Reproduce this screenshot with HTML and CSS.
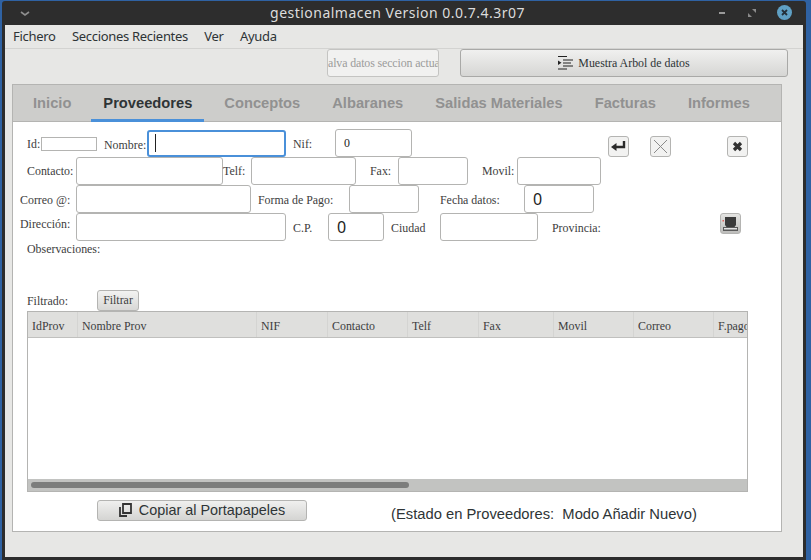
FILE: index.html
```html
<!DOCTYPE html>
<html lang="es">
<head>
<meta charset="utf-8">
<title>gestionalmacen</title>
<link rel="stylesheet" href="styles.css">
</head>
<body>
<div class="window">
  <header class="titlebar">
    <svg class="tb-menu" width="10" height="6" viewBox="0 0 10 6"><path d="M1 1l4 3 4-3" fill="none" stroke="#8e8e8e" stroke-width="1.6"/></svg>
    <span class="title">gestionalmacen Version 0.0.7.4.3r07</span>
    <div class="wm">
      <svg width="8" height="4" viewBox="0 0 8 4"><rect y="1" width="6" height="2" fill="#9a9a9a"/></svg>
      <svg width="8" height="8" viewBox="0 0 8 8"><path d="M8 0v4L4 0zM0 8V4l4 4z" fill="#8a8a8a"/></svg>
      <svg width="15" height="15" viewBox="0 0 15 15"><circle cx="7.5" cy="7.5" r="7.5" fill="#5fa0c4"/><path d="M5 5l5 5M10 5l-5 5" stroke="#23303a" stroke-width="1.8"/></svg>
    </div>
  </header>
  <div class="client">
    <nav class="menubar"><span>Fichero</span><span>Secciones Recientes</span><span>Ver</span><span>Ayuda</span></nav>
    <div class="toolbar">
      <button class="tool tool-disabled"><span class="clip">alva datos seccion actual</span></button>
      <button class="tool tool-tree">
        <svg width="15" height="14" viewBox="0 0 15 14"><path d="M0 .5h9M0 13h9M5 4h10M5 7h8M5 10h10" stroke="#222" stroke-width="1.2" fill="none"/><path d="M0 4.500l3.500 2.200L0 9z" fill="#222"/></svg>
        Muestra Arbol de datos
      </button>
    </div>
    <section class="panel">
      <div class="tabs">
        <span class="tab">Inicio</span>
        <span class="tab active">Proveedores</span>
        <span class="tab">Conceptos</span>
        <span class="tab">Albaranes</span>
        <span class="tab">Salidas Materiales</span>
        <span class="tab">Facturas</span>
        <span class="tab">Informes</span>
      </div>
      <div class="page">
        <div class="row r1">
          <label class="l-id">Id:</label><div class="f f-id"></div>
          <label class="l-nombre">Nombre:</label><div class="f f-nombre"><i class="caret"></i></div>
          <label class="l-nif">Nif:</label><div class="f f-nif">0</div>
          <button class="ib ib1"><svg width="15" height="11" viewBox="0 0 15 11"><path d="M13 0v6H5" fill="none" stroke="#2a2a2a" stroke-width="2.4"/><path d="M0 6l5.500-4v8z" fill="#2a2a2a"/></svg></button>
          <button class="ib ib2"><svg width="15" height="15" viewBox="0 0 15 15"><path d="M1 1l13 13M14 1L1 14" stroke="#8b8b8b" stroke-width="1"/></svg></button>
          <button class="ib ib3"><svg width="11" height="11" viewBox="0 0 11 11"><path d="M2 2l7 7M9 2l-7 7" stroke="#333" stroke-width="3.200"/></svg></button>
        </div>
        <div class="row r2">
          <label class="l-contacto">Contacto:</label><div class="f f-contacto"></div>
          <label class="l-telf">Telf:</label><div class="f f-telf"></div>
          <label class="l-fax">Fax:</label><div class="f f-fax"></div>
          <label class="l-movil">Movil:</label><div class="f f-movil"></div>
        </div>
        <div class="row r3">
          <label class="l-correo">Correo @:</label><div class="f f-correo"></div>
          <label class="l-forma">Forma de Pago:</label><div class="f f-forma"></div>
          <label class="l-fecha">Fecha datos:</label><div class="f f-fecha big">0</div>
        </div>
        <div class="row r4">
          <label class="l-dir">Dirección:</label><div class="f f-dir"></div>
          <label class="l-cp">C.P.</label><div class="f f-cp big">0</div>
          <label class="l-ciudad">Ciudad</label><div class="f f-ciudad"></div>
          <label class="l-prov">Provincia:</label>
          <button class="ib ib4"><svg width="17" height="16" viewBox="0 0 17 16"><path d="M3 1h11v8l-1.500 2h-8L3 9z" fill="#3a3a3a"/><path d="M1 11h15v4H1z" fill="#5a5a5a"/><path d="M2 12h13v1.500H2z" fill="#e2e2e2"/><rect x="0.500" y="4" width="1.500" height="1.500" fill="#e0605a"/></svg></button>
        </div>
        <div class="obs">Observaciones:</div>
        <div class="filter"><label>Filtrado:</label><button class="filter-btn">Filtrar</button></div>
        <div class="table">
          <div class="thead">
            <span class="c1">IdProv</span><span class="c2">Nombre Prov</span><span class="c3">NIF</span><span class="c4">Contacto</span><span class="c5">Telf</span><span class="c6">Fax</span><span class="c7">Movil</span><span class="c8">Correo</span><span class="c9">F.pago</span>
          </div>
          <div class="tbody"></div>
          <div class="hscroll"><div class="thumb"></div></div>
        </div>
        <div class="bottom">
          <button class="copy">
            <svg width="13" height="14" viewBox="0 0 13 14"><path d="M4 1h8v9H4z" fill="none" stroke="#333" stroke-width="1.800"/><path d="M1 4v9h7" fill="none" stroke="#333" stroke-width="1.800"/></svg>
            Copiar al Portapapeles
          </button>
          <span class="status">(Estado en Proveedores:&nbsp; Modo Añadir Nuevo)</span>
        </div>
      </div>
    </section>
  </div>
</div>
</body>
</html>
```
FILE: styles.css
```css
* { box-sizing: border-box; }
html, body { margin: 0; padding: 0; }
body { width: 811px; height: 560px; overflow: hidden; background: #2f62a3; font-family: "Liberation Serif", serif; }
button { font: inherit; margin: 0; padding: 0; }

.window { width: 804px; height: 559px; margin: 1px 0 0 2px; background: #2d2d2d; padding: 0 3px 3px; display: flex; flex-direction: column; border-radius: 3px 3px 0 0; }
.titlebar { height: 24px; flex: none; position: relative; display: flex; align-items: center; justify-content: center; color: #dcdcdc; font: 14px "Noto Sans", sans-serif; letter-spacing: .48px; }
.title { margin-left: -13px; margin-top: -1px; }
.tb-menu { position: absolute; left: 15px; top: 10px; }
.wm { position: absolute; right: 11px; top: 4px; display: flex; align-items: center; gap: 21px; }

.client { flex: 1; background: #e7e7e5; display: flex; flex-direction: column; }
.menubar { height: 24px; flex: none; display: flex; gap: 16.300px; padding: 0 0 2px 8px; align-items: center; border-bottom: 1px solid #d3d3d1; font: 13px "Noto Sans", sans-serif; letter-spacing: -.3px; color: #2e3436; }
.toolbar { height: 36px; flex: none; display: flex; padding: 0 0 0 322px; gap: 21px; }
.tool { height: 28px; border: 1px solid #b5b5b3; border-radius: 3px; font-size: 11.900px; }
.tool-disabled { width: 112px; background: #f1f1f0; color: #9b9b9b; overflow: hidden; padding: 0; border-color: #c4c4c2; }
.clip { display: block; white-space: nowrap; width: 100%; overflow: hidden; letter-spacing: -.12px; text-align: left; }
.tool-tree { width: 328px; background: linear-gradient(#f0f0ef, #d6d6d4); color: #2e3436; display: flex; align-items: center; justify-content: center; gap: 5px; border-color: #a9a9a7; }

.panel { margin: -1px 21px 0 7px; width: 770px; height: 448px; border: 1px solid #b4b4b2; background: #fff; display: flex; flex-direction: column; }
.tabs { height: 37px; flex: none; background: #cdcdcb; border-bottom: 1px solid #b4b4b2; display: flex; font: bold 14.700px "Liberation Sans", sans-serif; color: #919191; padding-left: 8px; }
.tab { padding: 0 12px; line-height: 36px; margin-right: 8px; height: 37px; }
.tab.active { color: #2e3436; border-bottom: 3px solid #4a90d9; }

.page { flex: 1; font-size: 11.900px; color: #3d3d3d; display: flex; flex-direction: column; padding-top: 7px; }
.row { display: flex; height: 28px; flex: none; align-items: center; }
.row label { flex: none; white-space: nowrap; }
.f { height: 28px; flex: none; border: 1px solid #b4b4b2; border-radius: 3px; background: #fff; display: flex; align-items: center; padding-left: 8px; color: #222; }
.big { font: 16px "Noto Sans", sans-serif; }

.l-id { margin-left: 14px; width: 14px; margin-top: 3px; }
.f-id { width: 56px; height: 14px; border-radius: 0; margin-top: 2px; }
.l-nombre { margin-left: 7px; width: 43px; margin-top: 5px; }
.f-nombre { width: 139px; height: 27px; border: 2px solid #4a90d9; }
.caret { width: 1px; height: 18px; background: #222; margin-left: -2px; }
.l-nif { margin-left: 7px; width: 42px; margin-top: 3px; }
.f-nif { width: 77px; }
.ib { flex: none; width: 21px; height: 21px; border: 1px solid #b4b4b2; border-radius: 3px; background: #f2f2f1; display: flex; align-items: center; justify-content: center; }
.ib1 { margin-left: 196px; margin-top: 7px; }
.ib2 { margin-left: 21px; margin-top: 7px; }
.ib3 { margin-left: 56px; margin-top: 7px; }
.ib4 { margin-left: 120px; background: linear-gradient(#e4e4e2, #bdbdbb); margin-top: -7px; }

.l-contacto { margin-left: 14px; width: 49px; }
.f-contacto { width: 147px; }
.l-telf { width: 28px; }
.f-telf { width: 105px; }
.l-fax { margin-left: 14px; width: 28px; }
.f-fax { width: 70px; }
.l-movil { margin-left: 14px; width: 35px; }
.f-movil { width: 84px; }

.l-correo { margin-left: 7px; width: 56px; margin-top: 2px; }
.f-correo { width: 175px; }
.l-forma { margin-left: 7px; width: 91px; margin-top: 2px; }
.f-forma { width: 70px; }
.l-fecha { margin-left: 21px; width: 84px; margin-top: 2px; }
.f-fecha { width: 70px; }

.l-dir { margin-left: 7px; width: 56px; margin-top: -5px; }
.f-dir { width: 210px; }
.l-cp { margin-left: 7px; width: 35px; margin-top: 2px; }
.f-cp { width: 56px; }
.l-ciudad { margin-left: 7px; width: 49px; margin-top: 2px; }
.f-ciudad { width: 98px; }
.l-prov { margin-left: 14px; width: 48px; margin-top: 2px; }

.obs { margin: 0 0 0 14px; height: 20px; line-height: 16px; }
.filter { margin: 29px 0 0 14px; height: 21px; display: flex; align-items: center; flex: none; }
.filter label { width: 70px; margin-top: 1px; }
.filter-btn { width: 42px; height: 21px; border: 1px solid #b4b4b2; border-radius: 3px; background: linear-gradient(#f2f2f1, #d8d8d6); color: #3d3d3d; }

.table { margin-left: 14px; width: 721px; height: 181px; border: 1px solid #b4b4b2; display: flex; flex-direction: column; overflow: hidden; flex: none; }
.thead { height: 26px; flex: none; display: flex; background: #dfdfdd; border-bottom: 1px solid #c0c0be; }
.thead span { flex: none; padding-left: 4px; line-height: 28px; border-right: 1px solid #d4d4d2; white-space: nowrap; overflow: hidden; }
.c1 { width: 50px; } .c2 { width: 179px; } .c3 { width: 71px; } .c4 { width: 80px; } .c5 { width: 71px; } .c6 { width: 75px; } .c7 { width: 80px; } .c8 { width: 80px; } .c9 { width: 34px; border-right: 0; }
.tbody { flex: 1; background: #fff; }
.hscroll { height: 12px; flex: none; background: #c2c3c1; padding: 3px; }
.thumb { width: 378px; height: 6px; border-radius: 3px; background: #7c7d7c; }

.bottom { display: flex; margin: 8px 0 0 84px; height: 21px; flex: none; }
.copy { width: 210px; height: 21px; border: 1px solid #b4b4b2; border-radius: 3px; background: linear-gradient(#f0f0ef, #d4d4d2); font: 14.400px "Liberation Sans", sans-serif; color: #2e3436; display: flex; align-items: center; justify-content: center; gap: 7px; padding-bottom: 1px; }
.status { margin: 6px 0 0 84px; font: 14.750px "Liberation Sans", sans-serif; color: #2e3436; white-space: nowrap; }
```
